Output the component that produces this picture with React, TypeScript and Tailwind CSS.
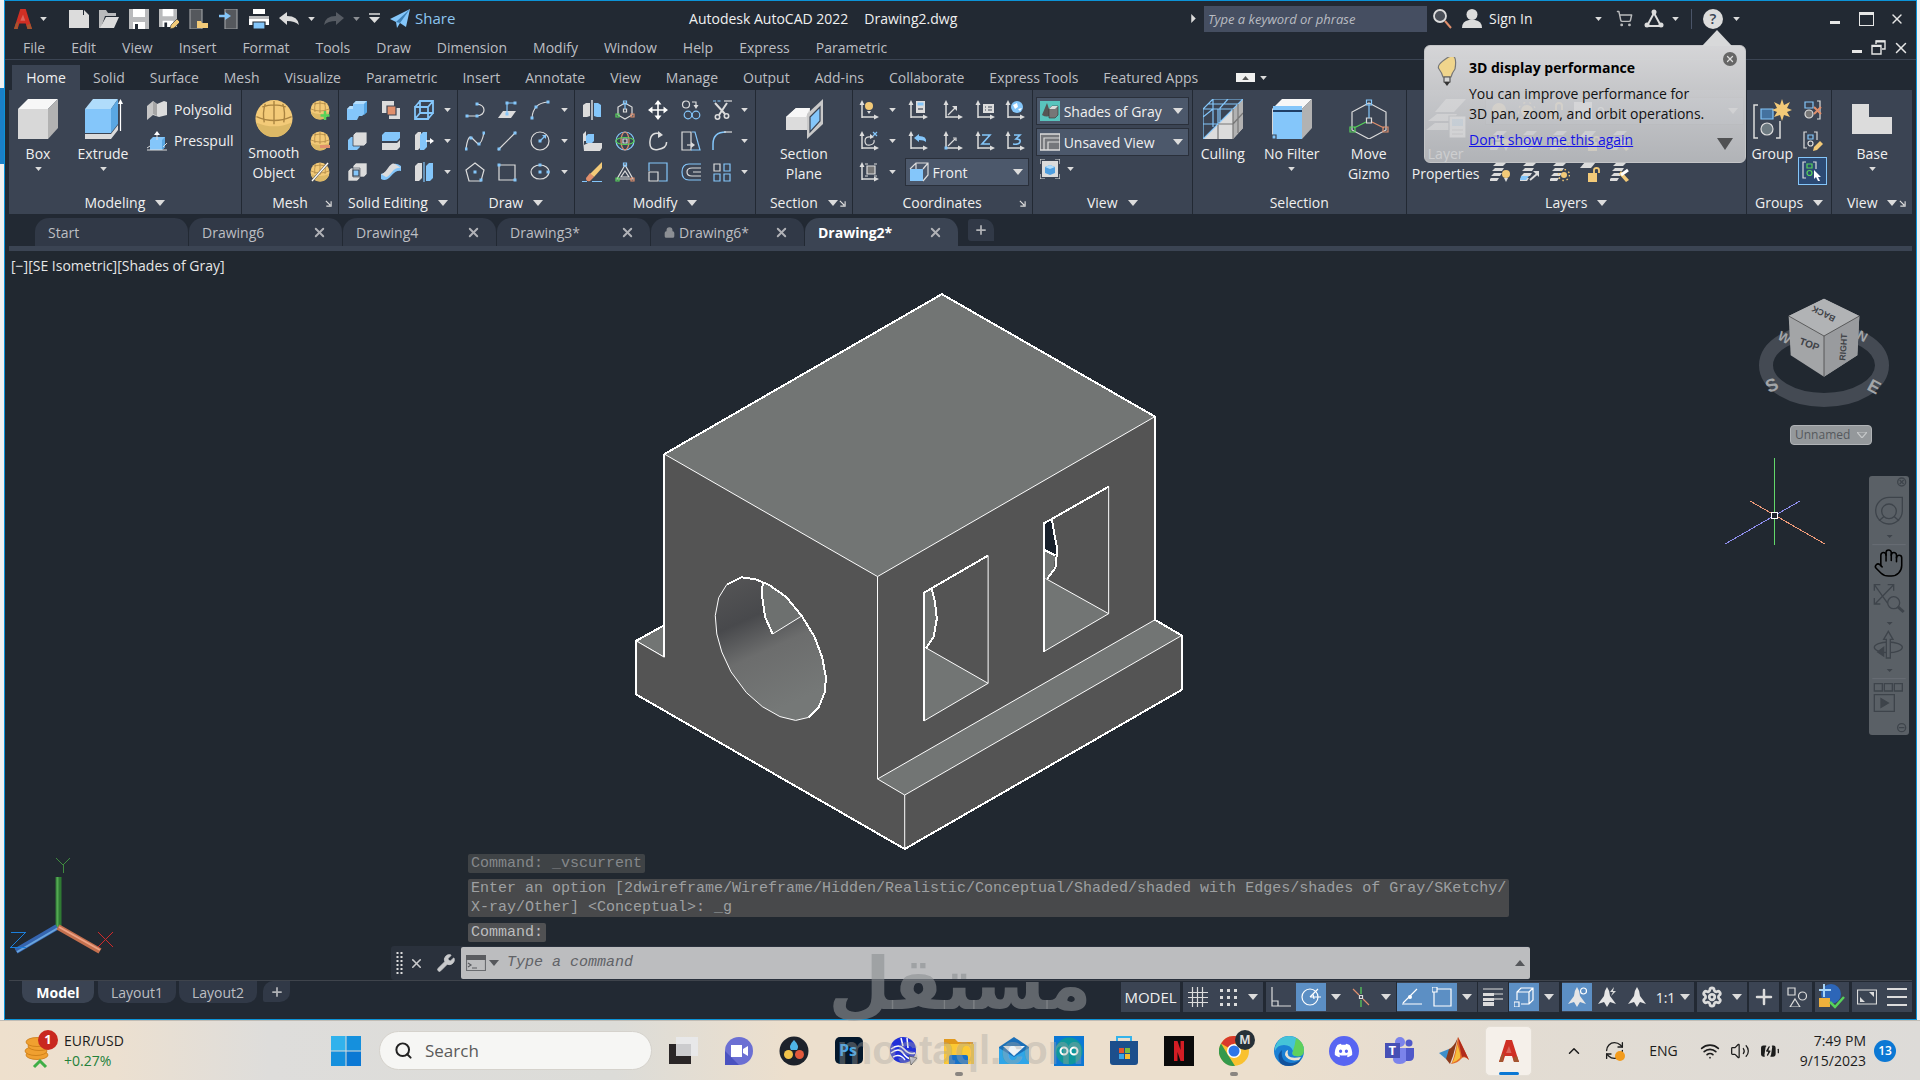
import type { ReactNode } from 'react';
import {
  BatteryCharging,
  ChevronUp,
  Hand,
  Lock,
  Plus,
  RefreshCw,
  Search,
  Settings,
  ShoppingCart,
  Volume2,
  Wifi,
  Wrench,
  X,
} from 'lucide-react';
import { FaDiscord } from 'react-icons/fa';

/* ---------- small building blocks ---------- */

const L = '#dcdcdc';
const B = '#84c6fa';
const O = '#e08f6c';
const G = '#57d25a';
const Y = '#f3ca78';

interface IconProps {
  children: ReactNode;
  className?: string;
  box?: string;
}

function Icon({ children, className = 'h-5 w-5', box = '0 0 20 20' }: IconProps) {
  return (
    <svg viewBox={box} className={`shrink-0 ${className}`} fill="none" stroke={L} strokeWidth="1.2" aria-hidden="true">
      {children}
    </svg>
  );
}

function Caret({ big = false, className = 'text-[#dcdcdc]' }: { big?: boolean; className?: string }) {
  return (
    <svg viewBox="0 0 10 6" className={`shrink-0 ${big ? 'h-[6px] w-[10px]' : 'h-[4px] w-[7px]'} ${className}`} aria-hidden="true">
      <path d="M0 0h10L5 6z" fill="currentColor" />
    </svg>
  );
}

function Tool({ name, w, children }: { name: string; w: string; children: ReactNode }) {
  return (
    <button aria-label={name} className={`flex h-[31px] items-center justify-center ${w}`}>
      {children}
    </button>
  );
}

function Launcher() {
  return (
    <svg viewBox="0 0 8 8" className="absolute right-[6px] top-[7px] h-[7px] w-[7px]" stroke={L} strokeWidth="1.3" fill="none">
      <path d="M1 1l5 5M7 1.500v5.500H1.500" />
    </svg>
  );
}

interface PanelProps {
  title: string;
  grow: string;
  caret?: boolean;
  launcher?: boolean;
  children: ReactNode;
}

function Panel({ title, grow, caret = true, launcher = false, children }: PanelProps) {
  return (
    <section aria-label={title} className={`flex min-w-0 flex-col border-r border-[#222933] ${grow}`}>
      <div className="flex h-[97px] pt-1">{children}</div>
      <div className="relative mt-[6px] flex h-5 items-center justify-center gap-[10px] leading-5 text-[#f0f0f0]">
        {title}
        {caret && <Caret big />}
        {launcher && <Launcher />}
      </div>
    </section>
  );
}

interface BigProps {
  label: string;
  second?: string;
  w: string;
  caret?: boolean;
  children: ReactNode;
}

function BigButton({ label, second, w, caret = false, children }: BigProps) {
  return (
    <button className={`flex shrink-0 flex-col items-center pt-[5px] leading-5 text-[#f0f0f0] ${w}`}>
      {children}
      <span className="mt-[5px]">{label}</span>
      {second && <span>{second}</span>}
      {caret && <Caret className="mt-[3px] text-[#dcdcdc]" />}
    </button>
  );
}

function Combo({ name, value, className, children }: { name: string; value: string; className: string; children?: ReactNode }) {
  return (
    <label className={`flex h-7 items-center border border-[#2a303b] bg-[#4c586b] pl-[3px] pr-[5px] ${className}`}>
      {children}
      <select aria-label={name} className="min-w-0 flex-1 appearance-none bg-transparent pl-1 text-[#f0f0f0] outline-none">
        <option>{value}</option>
      </select>
      <Caret big />
    </label>
  );
}

/* ---------- ribbon icons ---------- */

const cubeBig = (top: string, side: string, face: string) => (
  <g stroke="none">
    <path d="M0 10L10 0h30L30 10z" fill={top} />
    <path d="M30 10L40 0v29L30 40z" fill={side} />
    <path d="M0 10h30v30H0z" fill={face} />
  </g>
);

const sphere = (
  <>
    <circle cx="10" cy="10" r="9.500" fill={Y} stroke="none" />
    <path d="M1 12q9 4 18 0Q17 19.500 10 19.500T1 12z" fill="#dcb866" stroke="none" />
    <path d="M10 1v12M1 9q9 4 18 0M5.500 2.500Q4 7 5 12M14.500 2.500Q16 7 15 12M4 4q6-2 12 0" stroke="#a98340" strokeWidth=".7" />
  </>
);

const solidIcons: [string, ReactNode][] = [
  ['Union', <><path d="M6 4l3-3h11v11l-5 4h-3l-2 4H0V9l3-3h3z" fill={B} stroke="none" /><path d="M6 4l3-3h11l-3 3zM0 9l3-3h3v3z" fill="#b5defc" stroke="none" /><path d="M17 4l3-3v11l-3 3z" fill="#56a6e4" stroke="none" /></>],
  ['Interfere', <><path d="M1 1h12v12H1zM8 8h11v11H8z" fill={L} stroke="none" /><path d="M6 6h9v9H6z" fill={O} stroke="#3b4453" /></>],
  ['Extract edges', <><path d="M1 7h13v12H1zM6 1h13v12H6zM1 7l5-6M14 7l5-6M14 19l5-6M1 19l5-6" stroke={B} strokeWidth="1.800" /></>],
  ['Subtract', <><path d="M1 9l3-3h9v10l-3 3H1z" fill={B} stroke="none" /><path d="M6 4l3-3h11v11l-3 3H6z" fill={L} stroke="#3b4453" strokeWidth=".8" /></>],
  ['Slice', <><path d="M1 4l3-3h15v6l-3 3H1z" fill={B} stroke="none" /><path d="M1 12h15l3-3v7l-3 3H1z" fill={L} stroke="none" /></>],
  ['Extrude faces', <><path d="M1 4l3-3h3v15l-3 3H1z" fill={L} stroke="none" /><path d="M6 4l3-3h4v15l-3 3H6z" fill={B} stroke="none" /><path d="M12 10h5" stroke="#fff" strokeWidth="1.500" /><path d="M16 7l4 3-4 3z" fill="#fff" stroke="none" /></>],
  ['Intersect', <><path d="M1 9l3-3h9v10l-3 3H1zM6 4l3-3h11v11l-3 3H6z" fill={L} stroke="#3b4453" strokeWidth=".6" /><path d="M6 8h6v6H6z" fill={B} stroke="#3b4453" /></>],
  ['Thicken', <><path d="M0 12q5-1 9-7t11-1v5q-5-1-10 5T0 17z" fill={B} stroke="none" /><path d="M0 12q3 0 7-6t7-4l6 4q-5-1-9 4t-6 5z" fill={L} stroke="none" /></>],
  ['Separate', <><path d="M1 4l3-3h4v15l-3 3H1z" fill={L} stroke="none" /><path d="M12 4l3-3h4v15l-3 3h-4z" fill={B} stroke="none" /><path d="M10 0v20" stroke={B} /></>],
];

const dot = (x: number, y: number) => <path d={`M${x - 1.500} ${y - 1.500}h3v3h-3z`} fill={B} stroke="none" />;

const drawIcons: [string, ReactNode][] = [
  ['Polyline', <><path d="M2 16h10Q19 15 19 10T12 4" />{dot(2, 16)}{dot(12, 16)}{dot(12, 4)}</>],
  ['Planar surface', <><path d="M1 18l5-7h13l-5 7z" fill={L} stroke="none" /><path d="M10 13V3h7" stroke={B} />{dot(10, 3)}{dot(18, 3)}{dot(10, 14)}</>],
  ['Arc', <><path d="M2 18Q3 3 18 2" />{dot(2, 18)}{dot(6, 7)}{dot(18, 2)}</>],
  ['Spline', <><path d="M1 18Q3 3 7 7t6 6q4 0 6-12" />{dot(1, 18)}{dot(6, 7)}{dot(14, 13)}{dot(19, 2)}</>],
  ['Line', <><path d="M1 19L19 1" />{dot(2, 18)}{dot(18, 2)}</>],
  ['Circle', <><circle cx="10" cy="10" r="9" /><path d="M10 10l5-5" stroke={B} />{dot(10, 10)}<path d="M12 4h4v4z" fill={B} stroke="none" /></>],
  ['Polygon', <><path d="M10 1l9 7-3 11H4L1 8z" />{dot(10, 10)}{dot(16, 18)}</>],
  ['Rectangle', <><path d="M2 3h16v15H2z" />{dot(2, 3)}{dot(18, 18)}</>],
  ['Ellipse', <><ellipse cx="10" cy="10" rx="9" ry="7" />{dot(10, 10)}{dot(10, 3)}{dot(18, 10)}</>],
];

const modifyIcons: [string, ReactNode][] = [
  ['3D mirror', <><path d="M1 5l3-2h4v13l-3 1H1z" fill={L} stroke="none" /><path d="M12 3h4l3 2v12h-4l-3-1z" fill={B} stroke="none" /><path d="M10 0v20" stroke="#fff" /></>],
  ['3D move', <><path d="M10 3l7 4v8l-7 4-7-4V7zM8.500 9h3v3h-3z" /><path d="M10 3v6" stroke={B} /><path d="M8.500 1h3v3h-3z" stroke={B} /><path d="M1 14h3v3H1z" stroke={G} /><path d="M16 14h3v3h-3z" stroke={O} /></>],
  ['Move', <><path d="M10 2v16M2 10h16" stroke="#fff" strokeWidth="1.600" /><path d="M10 0l3.500 4.500h-7zM10 20l3.500-4.500h-7zM0 10l4.500-3.500v7zM20 10l-4.500-3.500v7z" fill="#fff" stroke="none" /></>],
  ['Copy', <><circle cx="5" cy="4.500" r="3.500" /><circle cx="7" cy="15" r="3.800" stroke={B} /><circle cx="15" cy="15" r="3.800" stroke={B} /><path d="M11 2h4v4" /><path d="M12.500 5h5L15 9z" fill={L} stroke="none" /></>],
  ['Trim', <><path d="M1 1h8" stroke={B} strokeDasharray="3 1.500" /><path d="M12 1h8" /><path d="M3 3l10 11M15 3L7 15" strokeWidth="2" /><circle cx="5.500" cy="17" r="2.200" strokeWidth="1.600" /><circle cx="14.500" cy="16" r="2.200" strokeWidth="1.600" /></>],
  ['3D align', <><path d="M1 20V3l3-3v10h-2z" fill={L} stroke="none" /><path d="M4 5l2-2h6v7l-2 2H4z" fill={B} stroke="none" /><path d="M2 14l4-2h14v5l-2 3H2z" fill={L} stroke="none" /></>],
  ['3D rotate', <><circle cx="10" cy="10" r="9" stroke={B} /><ellipse cx="10" cy="10" rx="4" ry="9" stroke={O} /><ellipse cx="10" cy="10" rx="9" ry="3.500" stroke={G} /><path d="M8 8h4v4H8z" /></>],
  ['Rotate', <><path d="M13 3Q3 0 2 10t8 8.500T18.500 11" strokeWidth="1.500" /><path d="M10 0l5 4-5 3z" fill={L} stroke="none" /></>],
  ['Stretch', <><path d="M1 1h9v18H1z" /><path d="M11 1h3l5 18h-9" stroke={B} /><path d="M6 14h6" /><path d="M10 11l4 3-4 3z" fill={L} stroke="none" /></>],
  ['Fillet', <><path d="M1 19v-6Q1 1 14 1" stroke={B} strokeWidth="1.500" /><path d="M12 1h8" /></>],
  ['Erase', <><path d="M20 0v6l-8 9-4-3z" fill={Y} stroke="none" /><path d="M8 11l4 4-4 4q-4 1-4-3z" fill={O} stroke="none" /><path d="M0 19.500h5M10 19.500h10" stroke={B} /></>],
  ['3D scale', <><path d="M10 3L2 17h16zM10 9l-4 6h8z" /><path d="M8.500 1h3v3h-3z" stroke={B} /><path d="M1 16h3v3H1z" stroke={G} /><path d="M16 16h3v3h-3z" stroke={O} /></>],
  ['Scale', <><path d="M1 9V1h18v18h-8" stroke={B} /><path d="M1 10h9v9H1z" /></>],
  ['Offset', <><path d="M20 2H8Q1 2 1 10t7 8h12" stroke={B} /><path d="M20 6h-9Q6 6 6 10t5 4h9M20 10h-8" /></>],
  ['Array', <><path d="M2 2h6v7H2z" /><path d="M12 2h6v7h-6zM2 12h6v7H2zM12 12h6v7h-6z" stroke={B} /></>],
];

const ucs = (
  <>
    <path d="M3 18V4M3 17h13" strokeWidth="1.500" />
    <path d="M.5 5L3 0l2.500 5zM15 14.500l5 2.500-5 2.500z" fill={L} stroke="none" />
  </>
);

const ucsIcons: [string, ReactNode][] = [
  ['UCS icon', <>{ucs}<circle cx="10" cy="6" r="4" fill={Y} stroke="none" /><path d="M8 11h4l-2 3z" fill={L} stroke="none" /></>],
  ['Named UCS', <>{ucs}<path d="M8 1h9v12H8z" fill={L} stroke="none" /><path d="M9.500 2.500h6v3h-6z" fill={B} stroke="none" /><path d="M10 9h5" stroke="#3b4453" /></>],
  ['UCS view', <>{ucs}<path d="M5 15l7-7" /><path d="M9 6h5v5z" fill={L} stroke="none" /></>],
  ['UCS list', <>{ucs}<path d="M8 4h11v9H8z" fill={L} stroke="none" /><path d="M10 7h1M13 7h4M10 10h1M13 10h4" stroke="#3b4453" /></>],
  ['UCS world', <>{ucs}<circle cx="12" cy="7" r="6" fill={B} stroke="none" /><path d="M8 5l4-2 1 4-3 2zM13 9l4-1-2 3z" fill="#fff" stroke="none" /></>],
  ['UCS X', <>{ucs}<path d="M12 6Q6 5 6 10t5 4 4-5" /><path d="M11 3l4 3-4 2z" fill={L} stroke="none" /><path d="M14 1l4 4M18 1l-4 4" stroke={B} /></>],
  ['UCS previous', <>{ucs}<path d="M6 7l5-4v2q8 0 7 6-2-2-7-2v2z" fill={B} stroke="none" /></>],
  ['UCS origin', <>{ucs}<path d="M5 15l7-7M10 7h3v3" />{dot(3, 17)}</>],
  ['UCS Z axis', <>{ucs}<path d="M7 4h8L7 13h8" stroke={B} strokeWidth="1.600" /></>],
  ['UCS 3 point', <>{ucs}<path d="M9 4h6l-4 4q5 0 4 3t-7 2" stroke={B} strokeWidth="1.600" /></>],
];

const sheets = (
  <path d="M3 4L7 0h10l-4 4zM2 9l3-3h9l-2 3zM1 14l3-3h8l-2 3zM0 17l1-1h8l-2 3H0z" fill={L} stroke="none" />
);

const layerIcons: [string, ReactNode][] = [
  ['Layer off', <>{sheets}<circle cx="16" cy="12" r="4" fill={Y} stroke="none" /><path d="M14 16h4l-2 4z" fill={L} stroke="none" /></>],
  ['Layer change', <>{sheets}<path d="M1 14h8l-3 4H0z" fill={B} stroke="none" /><path d="M10 18l7-6" strokeWidth="2" /><path d="M13 9h6v6z" fill={L} stroke="none" /></>],
  ['Layer freeze', <>{sheets}<circle cx="14" cy="13" r="3" fill={Y} stroke="none" /><circle cx="14" cy="13" r="5.500" stroke={Y} strokeWidth="1.500" strokeDasharray="1.500 2.800" /></>],
  ['Layer lock', <><path d="M0 6l5-6h11l-5 6z" fill={L} stroke="none" /><path d="M8 11h9v9H8z" fill={Y} stroke="none" /><path d="M14 11V8q0-2 2.500-2T19 8v3" stroke={Y} strokeWidth="1.800" /></>],
  ['Layer match', <>{sheets}<path d="M11 9l8 9-3 2-7-8z" fill={Y} stroke="none" /><path d="M18 8l-7 5" stroke="#fff" strokeWidth="3" /></>],
];

const isoLayerIcons = [...layerIcons].slice(0, 3).concat(layerIcons.slice(3));

/* ---------- title bar ---------- */

function AutocadLogo({ className }: { className: string }) {
  return (
    <svg viewBox="0 0 20 22" className={className} aria-hidden="true">
      <path d="M7 0h6l7 22h-5l-2-6H6l-2 6H0z" fill="#cf2f24" />
      <path d="M10 6l2.500 7H7z" fill="#fff" fillOpacity=".25" />
      <path d="M0 22l2-6 3-3-1 9zM20 22l-2-6-4 2 1 4z" fill="#a3552f" />
    </svg>
  );
}

const floppy = (
  <>
    <path d="M0 0h20v20H0z" fill="#b9babc" stroke="none" />
    <path d="M4 0h12v8H4zM4 13h12v7H4z" fill="#fff" stroke="none" />
    <path d="M6 15h3v5H6z" fill="#222933" stroke="none" />
  </>
);

const quickIcons: [string, ReactNode][] = [
  ['New', <path d="M0 1h14v5h6v13H0z M15 1l5 5h-5z" fill={L} stroke="none" />],
  ['Open', <><path d="M0 19V1h7l2 3h8v3H6L2 19z" fill="#b9babc" stroke="none" /><path d="M7 8h13l-5 11H1z" fill={L} stroke="none" /></>],
  ['Save', floppy],
  ['Save as', <><g transform="scale(.9)">{floppy}</g><path d="M11 20l1-4 6-6 3 3-6 6z" fill={Y} stroke="#222933" strokeWidth=".6" /></>],
  ['Open from mobile', <><path d="M1 0h12v20H1z" fill="#55585d" stroke="#9a9c9f" /><path d="M8 12h4l1 2h6v5H8z" fill={Y} stroke="none" /></>],
  ['Save to mobile', <><path d="M6 0h12v20H6z" fill="#55585d" stroke="#9a9c9f" /><path d="M0 7h7" stroke={B} strokeWidth="2.500" /><path d="M6 3l6 4-6 4z" fill={B} stroke="none" /></>],
  ['Plot', <><path d="M4 0h12v5H4zM0 7h20v9H0z" fill="#fff" stroke="none" /><path d="M0 7h20v3H0z" fill="#b9babc" stroke="none" /><path d="M4 13h12v7H4z" fill={B} stroke="#222933" /></>],
];

function TitleBar() {
  return (
    <header className="flex h-[35px] items-center">
      <div className="flex items-center">
        <AutocadLogo className="ml-[9px] h-5 w-[18px]" />
        <Caret className="ml-[8px] text-[#dcdcdc]" />
        <div className="ml-[22px] flex gap-[10px]">
          {quickIcons.map(([name, art]) => (
            <button key={name} aria-label={name}>
              <Icon>{art}</Icon>
            </button>
          ))}
          <button aria-label="Undo">
            <Icon><path d="M0 9l8-6v4q11 0 12 9-4-4-12-4v4z" fill={L} stroke="none" /></Icon>
          </button>
        </div>
        <Caret className="ml-[9px] text-[#dcdcdc]" />
        <button aria-label="Redo" className="ml-[9px]">
          <Icon><path d="M20 9l-8-6v4Q1 7 0 16q4-4 12-4v4z" fill="#565b63" stroke="none" /></Icon>
        </button>
        <Caret className="ml-[9px] text-[#8c8f94]" />
        <Icon className="ml-[9px] h-[11px] w-[11px]" box="0 0 11 11"><path d="M0 1h11" strokeWidth="1.500" /><path d="M0 4h11L5.500 10z" fill={L} stroke="none" /></Icon>
        <Icon className="ml-[10px] h-5 w-5"><path d="M0 10L20 0 16 18l-6-4-3 5-1-6z" fill={B} stroke="none" /><path d="M20 0L6 13l4 1z" fill="#3c7fb5" stroke="none" /></Icon>
        <button className="ml-[5px] text-[15px] text-[#8cc5f0]">Share</button>
      </div>
      <h1 className="flex flex-1 justify-center gap-4 text-[#f0f0f0]">
        <span>Autodesk AutoCAD 2022</span>
        <span>Drawing2.dwg</span>
      </h1>
      <div className="flex items-center">
        <svg viewBox="0 0 5 10" className="h-[9px] w-[5px]" aria-hidden="true"><path d="M0 0l5 5-5 5z" fill={L} /></svg>
        <input
          aria-label="Search help"
          placeholder="Type a keyword or phrase"
          className="ml-2 h-[26px] w-[223px] bg-[#454e61] px-1 text-[13px] italic outline-none placeholder:text-[#b9bcc2]"
        />
        <Icon className="ml-[6px] h-5 w-5"><circle cx="7" cy="7" r="6" strokeWidth="1.800" fill="#4a4f58" /><path d="M12 12l6 7" stroke={O} strokeWidth="2" /></Icon>
        <Icon className="ml-[9px] h-5 w-5"><circle cx="10" cy="5.500" r="5.500" fill={L} stroke="none" /><path d="M0 19q0-7 7-8h6q7 1 7 8z" fill={L} stroke="none" /></Icon>
        <button className="ml-[7px] w-[106px] text-left text-[#f0f0f0]">Sign In</button>
        <Caret />
        <ShoppingCart className="ml-[14px] h-[17px] w-[17px] text-[#b9babc]" strokeWidth={2} />
        <Icon className="ml-[11px] h-5 w-5"><path d="M10 4L3 17h14z" strokeWidth="2" /><circle cx="10" cy="3" r="2.500" fill={L} stroke="none" /><circle cx="3" cy="16" r="2.500" fill={L} stroke="none" /><circle cx="17" cy="16" r="2.500" fill={L} stroke="none" /></Icon>
        <Caret className="ml-[8px] text-[#dcdcdc]" />
        <span className="ml-3 h-5 w-px bg-[#4a5468]" />
        <button aria-label="Help" className="ml-[11px] flex h-5 w-5 items-center justify-center rounded-full bg-[#dcdcdc] text-[15px] font-semibold text-[#3b4453]">?</button>
        <Caret className="ml-[10px] text-[#dcdcdc]" />
        <button aria-label="Minimize" className="ml-[90px] mt-2 h-[3px] w-[10px] bg-[#e6e6e6]" />
        <button aria-label="Maximize" className="ml-[19px] h-[14px] w-[15px] border border-t-[3px] border-[#e6e6e6]" />
        <button aria-label="Close" className="mr-[11px] ml-[15px]"><X className="h-[18px] w-[16px] text-[#e6e6e6]" strokeWidth={2} /></button>
      </div>
    </header>
  );
}

const menus = ['File', 'Edit', 'View', 'Insert', 'Format', 'Tools', 'Draw', 'Dimension', 'Modify', 'Window', 'Help', 'Express', 'Parametric'];

function MenuBar() {
  return (
    <nav className="flex h-6 items-center gap-[26px] border-b border-[#3b4453] pl-[18px] text-[#bdbfc3]">
      {menus.map((m) => (
        <button key={m}>{m}</button>
      ))}
      <div className="ml-auto flex items-center pr-[6px]">
        <button aria-label="Minimize drawing" className="mt-2 h-[3px] w-[10px] bg-[#e6e6e6]" />
        <button aria-label="Restore drawing" className="ml-[9px]">
          <Icon className="h-[15px] w-[15px]" box="0 0 15 15"><path d="M5 4V1h9v8h-3M1 5.500h9V14H1z" stroke="#e6e6e6" strokeWidth="1.400" /><path d="M1 6h9M5 1.500h9" stroke="#e6e6e6" strokeWidth="2" /></Icon>
        </button>
        <button aria-label="Close drawing" className="ml-[6px]"><X className="h-[18px] w-[18px] text-[#e6e6e6]" strokeWidth={2} /></button>
      </div>
    </nav>
  );
}

const ribbonTabs = ['Solid', 'Surface', 'Mesh', 'Visualize', 'Parametric', 'Insert', 'Annotate', 'View', 'Manage', 'Output', 'Add-ins', 'Collaborate', 'Express Tools', 'Featured Apps'];

function RibbonTabs() {
  return (
    <nav className="flex h-[30px] items-end pl-[7px] text-[#bdbfc3]">
      <button className="h-[25px] w-[68px] bg-[#3b4453] text-[#f0f0f0]">Home</button>
      <div className="flex h-[25px] items-center gap-[25px] pl-[13px]">
        {ribbonTabs.map((t) => (
          <button key={t}>{t}</button>
        ))}
        <div className="ml-[13px] flex items-center gap-[5px]">
          <button aria-label="Minimize ribbon" className="flex h-[9px] w-[19px] items-center justify-center bg-[#f0f0f0]">
            <Caret className="rotate-180 text-[#555]" />
          </button>
          <Caret />
        </div>
      </div>
    </nav>
  );
}

/* ---------- ribbon ---------- */

function Ribbon() {
  return (
    <div className="mx-1 flex h-[124px] bg-[#3b4453]">
      <Panel title="Modeling" grow="flex-[233_1_0]">
        <BigButton label="Box" w="w-[58px]" caret>
          <Icon className="h-10 w-10" box="0 0 40 40">{cubeBig('#f7f7f7', '#b2b2b2', '#d8d8d8')}</Icon>
        </BigButton>
        <BigButton label="Extrude" w="w-[72px]" caret>
          <Icon className="h-10 w-10" box="0 0 40 40">
            <path d="M2 10L10 0h25L28 10z" fill="#b0dcfb" stroke="none" />
            <path d="M28 10l7-10v25l-7 9z" fill="#5aa7e2" stroke="none" />
            <path d="M2 10h26v24H2z" fill={B} stroke="none" />
            <path d="M2 35h26l7-9v5l-7 9H2z" fill={L} stroke="none" />
            <path d="M37.500 3v29" stroke="#fff" />
            <path d="M35 5l2.500-5L40 5z" fill="#fff" stroke="none" />
          </Icon>
        </BigButton>
        <div className="flex flex-col pl-2 text-[#f0f0f0]">
          <button className="flex h-[31px] items-center gap-[7px]">
            <Icon><path d="M0 6l6-5v14l-6 5z" fill="#c5c5c5" stroke="none" /><path d="M6 1l4 3 7-3 3 1v13l-8 2-6-2z" fill={L} stroke="none" /><path d="M6 1l4 3v12l-4-2z" fill="#a5a5a5" stroke="none" /></Icon>
            Polysolid
          </button>
          <button className="flex h-[31px] items-center gap-[7px]">
            <Icon><path d="M3 9l3-3h12v10l-3 3H3z" fill={B} stroke="none" /><path d="M15 9l3-3v10l-3 3z" fill="#5aa7e2" stroke="none" /><path d="M10 3v6M0 19h20M16 16l4-4M0 17l3-2" strokeWidth="1" /><path d="M7 4l3-4 3 4z" fill="#fff" stroke="none" /></Icon>
            Presspull
          </button>
        </div>
      </Panel>

      <Panel title="Mesh" grow="flex-[97_1_0]" caret={false} launcher>
        <BigButton label="Smooth" second="Object" w="w-[64px]">
          <Icon className="h-[39px] w-10">{sphere}</Icon>
        </BigButton>
        <div className="flex flex-col">
          <Tool name="Smooth more" w="w-7"><Icon>{sphere}<path d="M15 11v9M10.500 15.500h9" stroke={G} strokeWidth="2.500" /></Icon></Tool>
          <Tool name="Smooth less" w="w-7"><Icon>{sphere}<path d="M10 15.500h10" stroke={O} strokeWidth="3" /></Icon></Tool>
          <Tool name="Refine mesh" w="w-7"><Icon>{sphere}<path d="M2 19L18 1" stroke="#5a5a5a" strokeWidth="2.500" /><path d="M2 19L18 1" stroke="#fff" /></Icon></Tool>
        </div>
      </Panel>

      <Panel title="Solid Editing" grow="flex-[118_1_0]">
        <div className="grid grid-cols-[35px_34px_32px_14px]">
          {[0, 3, 6].map((r) => (
            <div key={r} className="contents">
              {solidIcons.slice(r, r + 3).map(([n, a]) => <Tool key={n} name={n} w="w-full"><Icon>{a}</Icon></Tool>)}
              <Tool name="More" w="w-full"><Caret /></Tool>
            </div>
          ))}
        </div>
      </Panel>

      <Panel title="Draw" grow="flex-[117_1_0]">
        <div className="grid grid-cols-[34px_30px_36px_14px]">
          {[0, 3, 6].map((r) => (
            <div key={r} className="contents">
              {drawIcons.slice(r, r + 3).map(([n, a]) => <Tool key={n} name={n} w="w-full"><Icon>{a}</Icon></Tool>)}
              <Tool name="More" w="w-full"><Caret /></Tool>
            </div>
          ))}
        </div>
      </Panel>

      <Panel title="Modify" grow="flex-[181_1_0]">
        <div className="grid grid-cols-[33px_33px_33px_33px_30px_14px]">
          {[0, 5, 10].map((r) => (
            <div key={r} className="contents">
              {modifyIcons.slice(r, r + 5).map(([n, a]) => <Tool key={n} name={n} w="w-full"><Icon>{a}</Icon></Tool>)}
              <Tool name="More" w="w-full"><Caret /></Tool>
            </div>
          ))}
        </div>
      </Panel>

      <Panel title="Section" grow="flex-[96_1_0]" launcher>
        <BigButton label="Section" second="Plane" w="w-full">
          <Icon className="h-10 w-10" box="0 0 40 40">
            <path d="M2 18L12 9h14v22H2z" fill={L} stroke="none" />
            <path d="M2 18L12 9h14l-4 9z" fill="#f7f7f7" stroke="none" />
            <path d="M23 15L39 0v25L23 40z" fill="#c9c9c9" stroke="none" />
            <path d="M26 18l10-10v14L26 33z" fill={B} stroke="#3b4453" />
          </Icon>
        </BigButton>
      </Panel>

      <Panel title="Coordinates" grow="flex-[180_1_0]" caret={false} launcher>
        <div className="grid w-full grid-cols-[32px_16px_35px_34px_30px_30px]">
          {[0, 5].map((r) => (
            <div key={r} className="contents">
              <Tool name={ucsIcons[r][0]} w="w-full"><Icon>{ucsIcons[r][1]}</Icon></Tool>
              <Tool name="More" w="w-full"><Caret /></Tool>
              {ucsIcons.slice(r + 1, r + 5).map(([n, a]) => <Tool key={n} name={n} w="w-full"><Icon>{a}</Icon></Tool>)}
            </div>
          ))}
          <Tool name="UCS object" w="w-full"><Icon>{ucs}<path d="M8 4h8v8H8z" fill="#777" stroke={L} /><path d="M6 2h3M15 2h3M6 14h3M15 14h3" /></Icon></Tool>
          <Tool name="More" w="w-full"><Caret /></Tool>
          <Combo name="Named UCS" value="Front" className="col-span-4 mt-[2px] ml-[4px] w-[124px]">
            <Icon><path d="M1 7h13v12H1z" fill={B} stroke="none" /><path d="M1 7l6-6h12v12l-5 6M14 7l5-6M7 1v6" /></Icon>
          </Combo>
        </div>
      </Panel>

      <Panel title="View" grow="flex-[160_1_0]">
        <div className="flex w-full flex-col gap-[3px] px-[3px] pt-[3px]">
          <Combo name="Visual style" value="Shades of Gray" className="w-full">
            <Icon><path d="M0 0h20v20H0z" fill="#59c4bd" stroke="none" /><path d="M7 2l4 12q-4 3-9 0z" fill="#555" stroke="none" /><path d="M9 8l3-3h6v9l-3 3H9z" fill="#777" stroke="#333" strokeWidth=".6" /><path d="M9 8l3-3h6l-3 3z" fill={L} stroke="none" /></Icon>
          </Combo>
          <Combo name="Saved view" value="Unsaved View" className="w-full">
            <Icon><path d="M0 2h20v16H0z" fill="#75777b" stroke={L} strokeWidth="1.500" /><path d="M4 18V6h16M8 18V10h12" /></Icon>
          </Combo>
          <div className="flex items-center gap-[7px] pl-1">
            <Icon><path d="M2 2h16v16H2z" fill={L} stroke="none" /><path d="M0 5V0h5M15 0h5v5M20 15v5h-5M5 20H0v-5" /><path d="M5 8l5-2 5 2v6l-5 2-5-2z" fill="#4f9fe0" stroke="none" /><path d="M5 8l5-2 5 2-5 2z" fill="#b0dcfb" stroke="none" /></Icon>
            <Caret />
          </div>
        </div>
      </Panel>

      <Panel title="Selection" grow="flex-[214_1_0]" caret={false}>
        <BigButton label="Culling" w="w-[60px]">
          <Icon className="h-10 w-10" box="0 0 40 40">
            <path d="M0 40L30 10 40 0v29L30 40z" fill={L} stroke="none" />
            <path d="M30 10L40 0v29L30 40z" fill="#b2b2b2" stroke="none" />
            <path d="M0 40V10L10 0h30L0 40M10 0v28M25 0l-8 9v14M0 25h15M15 10v15M0 10h30M5 5h30M0 18l10-8" stroke={B} />
            <path d="M15 26v14M15 25h15M30 10v30M35 5v29M30 25l10-11" stroke="#777" />
          </Icon>
        </BigButton>
        <BigButton label="No Filter" w="w-[78px]" caret>
          <Icon className="h-10 w-10" box="0 0 40 40">
            {cubeBig('#f7f7f7', '#b2b2b2', '#d8d8d8')}
            <path d="M1 7h29v33H1z" fill={B} stroke="none" />
            <path d="M1 12h29" stroke="#1f3f66" strokeWidth="2" />
            <path d="M0 36h4v4H0z" fill={B} stroke="#3b4453" />
          </Icon>
        </BigButton>
        <BigButton label="Move" second="Gizmo" w="w-[76px]">
          <Icon className="h-10 w-10" box="0 0 40 40">
            <path d="M20 4l17 9v18l-17 9-17-9V13zM17.500 19h5v5h-5z" />
            <path d="M20 5v14M17.500 1h5v5h-5z" stroke={B} />
            <path d="M17 23L5 29M1 28h5v5H1z" stroke={G} />
            <path d="M23 23l12 6M34 28h5v5h-5z" stroke={O} />
          </Icon>
        </BigButton>
      </Panel>

      <Panel title="Layers" grow="flex-[341_1_0]">
        <BigButton label="Layer" second="Properties" w="w-[78px]">
          <Icon className="h-10 w-10" box="0 0 40 40">
            <path d="M9 13L20 0h20L28 13zM2 22l9-7h20l-4 7zM0 31l9-7h14v7z" fill={L} stroke="none" />
            <path d="M23 17h17v22H23z" fill="#fff" stroke="#3b4453" />
            <path d="M26 20h11v7H26z" fill={B} stroke="none" />
            <path d="M26 31h11M26 35h11" stroke="#888" />
          </Icon>
        </BigButton>
        <div className="flex flex-1 flex-col">
          <Combo name="Layer" value="0" className="mt-[3px] mr-[2px]">
            <Icon className="mr-2 h-5 w-5"><circle cx="10" cy="9" r="7" fill={Y} stroke="none" /></Icon>
            <Icon className="mr-2 h-5 w-5"><circle cx="10" cy="10" r="6" fill={Y} stroke="none" /><circle cx="10" cy="10" r="8.500" stroke={Y} strokeDasharray="2 4" /></Icon>
            <Icon className="mr-2 h-5 w-5"><path d="M2 9h11v9H2z" fill={Y} stroke="none" /><path d="M11 9V5q0-3 3-3t3 3v4" stroke={Y} strokeWidth="2" /></Icon>
            <Icon className="h-5 w-5"><path d="M1 1h18v18H1z" fill="#fff" stroke="none" /></Icon>
          </Combo>
          {[isoLayerIcons, layerIcons].map((row, i) => (
            <div key={i} className="flex">
              {row.map(([n, a]) => <Tool key={n} name={i ? `${n} on selection` : n} w="w-[30px]"><Icon>{a}</Icon></Tool>)}
            </div>
          ))}
        </div>
      </Panel>

      <Panel title="Groups" grow="flex-[85_1_0]">
        <BigButton label="Group" w="w-[51px]">
          <Icon className="h-10 w-10" box="0 0 40 40">
            <path d="M6 6H2v33h4M24 39h4V22" strokeWidth="1.500" />
            <path d="M9 10h12v10H9z" fill="#44729f" stroke={B} />
            <circle cx="15" cy="30" r="6" fill="#6c7980" />
            <path d="M30 0l2 6 6-3-3 6 5 2-5 2 3 5-6-2-2 6-2-6-6 2 3-5-5-2 5-2-3-6 6 3z" fill={Y} stroke="none" />
          </Icon>
        </BigButton>
        <div className="flex flex-col">
          <Tool name="Ungroup" w="w-[30px]"><Icon><path d="M14 1h3v18h-3" /><path d="M2 2h8v6H2z" stroke={B} /><circle cx="6" cy="14" r="4" fill="#777" stroke={L} /><path d="M11 7l7 7M18 7l-7 7" stroke={O} strokeWidth="2" /></Icon></Tool>
          <Tool name="Group edit" w="w-[30px]"><Icon><path d="M4 1H1v16h3M11 1h3v8" /><path d="M5 4h5v4H5z" stroke={B} /><circle cx="7.500" cy="12.500" r="2.500" /><path d="M10 20l1-4 6-6 3 3-6 6z" fill={Y} stroke="none" /></Icon></Tool>
          <button aria-label="Group selection" className="mt-[1px] flex h-7 w-[29px] items-center justify-center border border-[#84c6fa] bg-[#2c4a73]">
            <Icon><path d="M4 1H1v16h3M11 1h3v7" /><path d="M5 3h5v4H5z" stroke={G} /><circle cx="7.500" cy="12" r="2.500" stroke={G} /><path d="M12 9l7 7h-3l2 4h-2l-2-4-2 2z" fill="#fff" stroke="none" /></Icon>
          </button>
        </div>
      </Panel>

      <Panel title="View" grow="flex-[80_1_0] border-r-0" launcher>
        <BigButton label="Base" w="w-full" caret>
          <Icon className="h-10 w-10" box="0 0 40 40"><path d="M0 5h17v13h23v17H0z" fill={L} stroke="none" /></Icon>
        </BigButton>
      </Panel>
    </div>
  );
}

/* ---------- file tabs ---------- */

const files = [
  { name: 'Start', closable: false },
  { name: 'Drawing6', closable: true },
  { name: 'Drawing4', closable: true },
  { name: 'Drawing3*', closable: true },
  { name: 'Drawing6*', closable: true, locked: true },
  { name: 'Drawing2*', closable: true, active: true },
];

function FileTabs() {
  return (
    <div className="mx-1 border-b-[5px] border-[#3b4453]">
      <div className="flex h-8 items-end pl-[26px]">
        {files.map((f) => (
          <div
            key={f.name}
            className={`flex h-7 w-[154px] items-center justify-between rounded-t-[14px] border-r border-[#222933] pr-[15px] pl-[13px] ${
              f.active ? 'bg-[#3b4453] font-bold text-white' : 'bg-[#313947] text-[#bdbfc3]'
            }`}
          >
            <button className="flex items-center gap-1">
              {f.locked && <Lock className="h-[13px] w-[11px] fill-[#8c8f94] text-[#8c8f94]" strokeWidth={3} />}
              {f.name}
            </button>
            {f.closable && (
              <button aria-label={`Close ${f.name}`}>
                <X className="h-[15px] w-[15px] text-[#b0b2b6]" strokeWidth={3} />
              </button>
            )}
          </div>
        ))}
        <button aria-label="New drawing" className="ml-[9px] flex h-[22px] w-[26px] items-center justify-center self-center rounded-l-[3px] rounded-tr-[10px] bg-[#313947]">
          <Plus className="h-[14px] w-[14px] text-[#b0b2b6]" strokeWidth={3} />
        </button>
      </div>
    </div>
  );
}

/* ---------- viewport ---------- */

function SolidModel() {
  return (
    <svg viewBox="0 0 1568 1568" className="absolute top-[29px] left-[615px] h-[600px] w-[600px]" stroke="#fff" strokeLinejoin="round" fill="none" role="img" aria-label="Housing block">
      <defs>
        <linearGradient id="bore" x1="0" y1="0" x2=".35" y2="1">
          <stop offset="0" stopColor="#565657" />
          <stop offset=".35" stopColor="#48494c" />
          <stop offset=".6" stopColor="#6c6d6d" />
          <stop offset="1" stopColor="#757877" />
        </linearGradient>
      </defs>
      <g shapeRendering="crispEdges" strokeWidth="2.600">
        <path d="M42 943l74-41v84z" fill="#727574" />
        <path d="M116 455l557 320 725-418v531l70 41v142l-724 416-702-404V943l74 43z" fill="#545454" stroke="none" />
        <path d="M841 37l557 320-725 418-557-320z" fill="#727574" />
        <path d="M673 1304l725-416 70 41-724 417z" fill="#727574" />
        <path d="M673 775v529M744 1346v141M42 943l74 43" />
        <path d="M116 986V455L841 37l557 320v531l70 41v142l-724 416-702-404V943l74-41" strokeWidth="5.200" />

        <path id="hole" d="M317 777l-38 19-21 34-9 47 4 48 13 47 24 52 40 54 42 37 46 26 41 10 34-8 27-28 16-40 2-38-10-52-20-53-33-54-40-49-45-32-36-15z" fill="url(#bore)" />
        <path d="M373 790l-2 32 8 58 20 45 76-47-40-49-45-32z" fill="#6d706f" stroke="none" />
        <path d="M399 925l76-47" />
        <path d="M373 790l-2 32 8 58 20 45M279 796l38-19 37 5 36 15 45 32 40 49 33 54 20 53 10 52-2 38-16 40-27 28" strokeWidth="5.200" />

        <path d="M795 817l20-9 8 32 5 45-8 47-21 31-4-2z" fill="#6d706f" stroke="none" />
        <path d="M799 961l163 93-167 98V961z" fill="#727574" stroke="none" />
        <path d="M962 720v334l-167 98M799 961l163 93" />
        <path d="M795 1152V817l167-97M815 808l8 32 5 45-8 47-21 31" strokeWidth="5.200" />

        <path d="M1108 636l21-9 9 53 5 23-5 17-30-14z" fill="#18202b" stroke="none" />
        <path d="M1108 706l30 14-5 32-16 28h-9z" fill="#727574" stroke="none" />
        <path d="M1112 780l165 92-169 99V780z" fill="#727574" stroke="none" />
        <path d="M1277 540v332l-169 99M1112 780l165 92" />
        <path d="M1108 971V636l169-96M1129 627l9 53 5 23-5 49-21 28M1110 706l28 14" strokeWidth="5.200" />
      </g>
    </svg>
  );
}

function ViewCube() {
  return (
    <svg viewBox="0 0 420 360" className="h-[120px] w-[140px]" aria-label="View cube" role="img" fontFamily="Liberation Sans" fontWeight="bold">
      <ellipse cx="204" cy="220" rx="174" ry="104" fill="none" stroke="#444a53" strokeWidth="42" />
      <g fill="#a2a5a8" fontSize="54">
        <text x="62" y="140" fontSize="40" transform="rotate(28 62 140)">W</text>
        <text x="300" y="138" fontSize="40" transform="rotate(28 300 138)">N</text>
        <text x="38" y="304" transform="rotate(-24 38 304)">S</text>
        <text x="330" y="292" transform="rotate(28 330 292)">E</text>
      </g>
      <path d="M204 20l106 52-6 118-100 64-100-64-6-118z" fill="#a3a5a7" />
      <path d="M204 20l106 52-106 60L98 72z" fill="#b1b3b5" />
      <path d="M204 132l106-60-6 118-100 64z" fill="#999b9e" />
      <path d="M98 72l106 60 106-60M204 132v122" fill="none" stroke="#333" strokeWidth="2" />
      <g fill="#3f4247" fontSize="30">
        <text x="128" y="156" transform="rotate(20 128 156)">TOP</text>
        <text x="268" y="206" fontSize="26" transform="rotate(-86 268 206)">RIGHT</text>
        <text x="240" y="74" fontSize="26" transform="rotate(207 240 74)">BACK</text>
      </g>
    </svg>
  );
}

function NavigationBar() {
  const line = '#3e444b';
  return (
    <svg viewBox="0 0 120 777" className="h-[259px] w-10 rounded-[3px] bg-[#5a6066]" fill="none" stroke={line} strokeWidth="4" aria-label="Navigation bar" role="img">
      <circle cx="98" cy="18" r="12" />
      <path d="M92 12l12 12M104 12L92 24" />
      <path d="M60 64h40v42a40 40 0 1 1-40-42z" />
      <circle cx="60" cy="106" r="22" />
      <path d="M30 134l14-12M90 134l-14-12" />
      <path d="M10 206h100M10 608h100" stroke="#70767c" strokeWidth="2" />
      <path d="M53 177h18l-9 9zM53 438h18l-9 9zM53 579h18l-9 9z" fill={line} stroke="none" />
      <path d="M16 326l40 56M18 384l56-58M16 344v-18h18M56 326h18v18M16 366v18h18" />
      <circle cx="74" cy="380" r="18" />
      <path d="M86 392l18 16" strokeWidth="9" />
      <ellipse cx="58" cy="514" rx="42" ry="16" />
      <path d="M52 546v-56h-8l14-24 14 24h-8v56z" fill="#5a6066" />
      <path d="M26 528l18-14v26z" fill={line} />
      <path d="M16 623h24v22H16zM46 623h24v22H46zM76 623h24v22H76zM16 656h60v50H16z" />
      <path d="M36 668v26l22-13z" fill={line} />
      <circle cx="98" cy="755" r="12" />
      <path d="M90 755h16" />
      <Hand x="12" y="214" width="94" height="94" strokeWidth={1.200} />
    </svg>
  );
}

function Viewport() {
  return (
    <main className="relative flex min-h-0 flex-1 flex-col bg-[#212830]">
      <p className="pt-[5px] pl-[6px] leading-5 text-[#e6e6e6]">[−][SE Isometric][Shades of Gray]</p>
      <SolidModel />

      <div className="absolute top-[41px] right-[20px]"><ViewCube /></div>
      <button className="absolute top-[174px] right-[44px] flex h-5 w-[82px] items-center justify-between rounded-[4px] border border-[#b0b3b6] bg-[#94989b] px-1 text-[12px] text-[#54585d]">
        Unnamed
        <Icon className="h-[6px] w-[10px]" box="0 0 10 6"><path d="M0 0h10L5 6z" stroke="#c5c7c9" /></Icon>
      </button>

      <svg viewBox="0 0 100 88" className="absolute top-[207px] right-[91px] h-[88px] w-[100px]" fill="none" aria-hidden="true" shapeRendering="crispEdges">
        <path d="M0 86l75-43" stroke="#8f8fee" />
        <path d="M25 43l75 43" stroke="#ee9a78" />
        <path d="M49.500 0v87" stroke="#62d86a" />
        <path d="M46.500 54.500h6v6h-6z" stroke="#fff" fill="#212830" />
      </svg>

      <div className="absolute top-[225px] right-[7px]"><NavigationBar /></div>

      <svg viewBox="0 0 110 102" className="absolute bottom-[22px] left-[5px] h-[102px] w-[110px]" fill="none" aria-hidden="true">
        <path d="M48.500 21v50" stroke="#2f7a33" strokeWidth="6" />
        <path d="M47.500 21v50" stroke="#54a854" strokeWidth="2" />
        <path d="M47 71L6 95" stroke="#3565b0" strokeWidth="6" />
        <path d="M48 72L7 96" stroke="#6aa5dd" strokeWidth="2" />
        <path d="M48 71l42 24" stroke="#c4704e" strokeWidth="6" />
        <path d="M49 71l41 23" stroke="#eda184" strokeWidth="2" />
        <g shapeRendering="crispEdges">
          <path d="M46 2l7 7 7-7M53 9v8" stroke="#3f8a3f" />
          <path d="M1 76h15L1 91h15" stroke="#1b7fdc" />
          <path d="M88 76l15 15M103 76L88 91" stroke="#d02a2a" />
        </g>
      </svg>

      {/* command history sits above the floating command line */}
      <div className="mt-auto flex flex-col items-start gap-[6px] pb-1 pl-[463px] font-['Liberation_Mono',monospace] text-[15px] leading-[19px]">
        <p className="rounded-[2px] bg-[#3f4346] px-[3px] text-[#85888b]">Command: _vscurrent</p>
        <p className="rounded-[2px] bg-[#48494b] px-[3px] text-[#9ea0a2]">
          Enter an option [2dwireframe/Wireframe/Hidden/Realistic/Conceptual/Shaded/shaded with Edges/shades of Gray/SKetchy/
          <br />
          X-ray/Other] &lt;Conceptual&gt;: _g
        </p>
        <p className="rounded-[2px] bg-[#505153] px-[3px] text-[#bcbdbf]">Command:</p>
      </div>
      <div className="ml-[386px] flex h-[34px] w-[1139px] items-center rounded-[3px] bg-[#2a313c]">
        <Icon className="ml-[5px] h-[22px] w-[8px]" box="0 0 8 22"><path d="M1.500 0v22M5.500 0v22" strokeWidth="2" strokeDasharray="2 2" /></Icon>
        <button aria-label="Close command line" className="ml-[5px]"><X className="h-[15px] w-[15px] text-[#c9cacc]" strokeWidth={2.500} /></button>
        <button aria-label="Customize" className="ml-3"><Wrench className="h-5 w-5 fill-[#c9cacc] text-[#c9cacc]" strokeWidth={1} /></button>
        <div className="ml-[5px] flex h-8 flex-1 items-center rounded-[2px] bg-[#bcbdbf] px-[5px]">
          <Icon className="h-[17px] w-5" box="0 0 20 17"><path d="M.500.500h19v15H.500z" stroke="#6a6c70" /><path d="M0 0h20v5H0z" fill="#5a5c60" stroke="none" /><path d="M2 8l3 2-3 2M6 13h5" stroke="#5a5c60" /></Icon>
          <Caret big className="ml-[3px] text-[#55575b]" />
          <input
            aria-label="Command"
            placeholder="Type a command"
            className="ml-2 flex-1 bg-transparent font-['Liberation_Mono',monospace] text-[15px] italic outline-none placeholder:text-[#606266]"
          />
          <Caret big className="rotate-180 text-[#55575b]" />
        </div>
      </div>
    </main>
  );
}

/* ---------- layout tabs and status bar ---------- */

function StatusCell({ name, on = false, w = 'w-[30px]', children }: { name: string; on?: boolean; w?: string; children: ReactNode }) {
  return (
    <button aria-label={name} className={`flex items-center justify-center ${w} ${on ? 'my-[1px] bg-[#5c8fc4]' : ''}`}>
      {children}
    </button>
  );
}

function StatusGroup({ children }: { children: ReactNode }) {
  return <div className="flex h-[30px] bg-[#3b4453]">{children}</div>;
}

const arrowPerson = <path d="M10 0q3 4 3 9l6 8-6-2-3 5-3-5-6 2 6-8q0-5 3-9z" fill="#e6e6e6" stroke="none" />;

function StatusBar() {
  const drop = (
    <StatusCell name="Options" w="w-5">
      <Caret big />
    </StatusCell>
  );
  return (
    <footer className="mx-1 flex h-[39px] items-start border-t border-[#3f444c]">
      <div className="flex pl-[13px]">
        <button className="h-[22px] w-[72px] rounded-b-[10px] bg-[#3b4453] font-bold text-white">Model</button>
        <button className="ml-[4px] h-[22px] w-[78px] rounded-b-[10px] bg-[#313947] text-[#bdbfc3]">Layout1</button>
        <button className="ml-[3px] h-[22px] w-[78px] rounded-b-[10px] bg-[#313947] text-[#bdbfc3]">Layout2</button>
        <button aria-label="New layout" className="ml-[6px] flex h-[21px] w-[27px] items-center justify-center rounded-bl-[2px] rounded-tl-[10px] rounded-br-[10px] bg-[#313947]">
          <Plus className="h-[14px] w-[14px] text-[#b0b2b6]" strokeWidth={3} />
        </button>
      </div>
      <div className="mt-[1px] ml-auto flex gap-[3px]">
        <StatusGroup><button className="w-[59px] text-[15px] text-[#f0f0f0]">MODEL</button></StatusGroup>
        <StatusGroup>
          <StatusCell name="Grid"><Icon><path d="M4.500 0v20M9.500 0v20M14.500 0v20M0 5.500h20M0 10.500h20M0 15.500h20" /></Icon></StatusCell>
          <StatusCell name="Snap"><Icon><path d="M3.500 2v18M10.500 2v18M17.500 2v18" strokeWidth="3" strokeDasharray="3 4" /></Icon></StatusCell>
          {drop}
        </StatusGroup>
        <StatusGroup>
          <StatusCell name="Ortho"><Icon><path d="M1 0v19h19M1 14h6v5" /></Icon></StatusCell>
          <StatusCell name="Polar" on><Icon><circle cx="9" cy="10" r="8" stroke="#fff" /><path d="M9 10h11M9 10l8-8M12 7l1 5" stroke="#fff" /></Icon></StatusCell>
          {drop}
          <StatusCell name="Isometric"><Icon><path d="M2 2l6 6M12 12l6 6" stroke={O} /><path d="M10 0v7M10 13v7" stroke={G} /><path d="M8.500 8.500h3v3h-3z" /></Icon></StatusCell>
          {drop}
        </StatusGroup>
        <div className="-ml-[2px] flex gap-[1px]">
          <StatusGroup>
            <StatusCell name="Object tracking" on><Icon><path d="M0 17h20M1 16L15 2" stroke="#fff" /><circle cx="8" cy="10" r="2" fill="#fff" stroke="none" /></Icon></StatusCell>
            <StatusCell name="Object snap" on><Icon><path d="M2 5v14h17V2H5" stroke="#fff" /><path d="M0 0h5v5H0z" stroke="#fff" /></Icon></StatusCell>
            {drop}
          </StatusGroup>
          <StatusGroup>
            <StatusCell name="Line weight"><Icon><path d="M0 2h20M0 7h20" /><path d="M0 12h20" /><path d="M0 7.500h11M0 12.500h11" strokeWidth="3" /><path d="M0 17h11" strokeWidth="4" /></Icon></StatusCell>
          </StatusGroup>
          <StatusGroup>
            <StatusCell name="3D object snap" on><Icon><path d="M3 13V5l4-4h12v12l-4 4H7M3 5h12v12M15 5l4-4" stroke="#fff" /><path d="M0 15h5v5H0z" stroke="#fff" /></Icon></StatusCell>
            {drop}
          </StatusGroup>
        </div>
        <StatusGroup>
          <StatusCell name="Annotation visibility" on><Icon>{arrowPerson}<circle cx="16.500" cy="4" r="3" stroke="#fff" /></Icon></StatusCell>
          <StatusCell name="Auto scale"><Icon>{arrowPerson}<path d="M17 0l-4 5h3l-2 4 5-5h-3z" fill={L} stroke="none" /></Icon></StatusCell>
          <StatusCell name="Annotation scale"><Icon>{arrowPerson}</Icon></StatusCell>
          <button className="flex w-[42px] items-center justify-center gap-[5px] text-[#f0f0f0]">1:1 <Caret big /></button>
        </StatusGroup>
        <div className="flex gap-[2px]">
          <StatusGroup>
            <StatusCell name="Workspace"><Settings className="h-[22px] w-[22px] text-[#dcdcdc]" strokeWidth={3} /></StatusCell>
            {drop}
          </StatusGroup>
          <StatusGroup><StatusCell name="Annotation monitor"><Plus className="h-6 w-6 text-[#dcdcdc]" strokeWidth={2.500} /></StatusCell></StatusGroup>
        </div>
        <StatusGroup><StatusCell name="Isolate objects"><Icon><path d="M1 1h7v7H1zM8 12l5 8H3z" /><circle cx="15.500" cy="9" r="4" /></Icon></StatusCell></StatusGroup>
        <StatusGroup>
          <StatusCell name="Graphics performance" w="w-[34px]">
            <Icon className="h-[26px] w-[26px]" box="0 0 26 26"><circle cx="12" cy="10" r="10" fill="#2d66b8" stroke="none" /><path d="M0 14h11v9H0z" fill="#eeb03c" stroke="none" /><path d="M5 0v13M0 6h12" stroke="#a8d4f5" strokeWidth="2" /><path d="M11 18l5 5 9-10" stroke={G} strokeWidth="2.500" /></Icon>
          </StatusCell>
        </StatusGroup>
        <StatusGroup>
          <StatusCell name="Clean screen"><Icon><path d="M.500 3h19v14H.500z" /><path d="M12 5h5v5zM3 10v5h5z" fill={L} stroke="none" /></Icon></StatusCell>
          <StatusCell name="Customization"><Icon><path d="M0 2h20M0 10h20M0 18h20" strokeWidth="2" /></Icon></StatusCell>
        </StatusGroup>
      </div>
    </footer>
  );
}

/* ---------- notification ---------- */

function PerformanceTip() {
  return (
    <aside className="absolute top-[45px] right-[174px] h-[118px] w-[322px] rounded-[6px] border border-[#c4c5c7] bg-gradient-to-b from-[#dadadcf8] to-[#c6c7c9d8] pt-3 pl-[44px] text-[15px] text-[#111]">
      <svg viewBox="0 0 30 16" className="absolute top-[-16px] right-[13px] h-4 w-[30px]" aria-hidden="true"><path d="M0 16L15 0l15 16z" fill="#d8d9da" /></svg>
      <Icon className="absolute top-[11px] left-[12px] h-[30px] w-5" box="0 0 20 30">
        <path d="M6 20Q5 16 2 12T10 1t8 11q-3 4-4 8z" fill="#f0d58c" stroke="#777" />
        <path d="M7 20h6v5H7z" fill="#d5d5d5" stroke="#555" />
        <path d="M7 25h6l-3 4z" fill="#333" stroke="none" />
      </Icon>
      <h2 className="text-[14px] leading-5 font-bold text-black">3D display performance</h2>
      <p className="mt-[6px] text-[14px] leading-5">
        You can improve performance for
        <br />
        3D pan, zoom, and orbit operations.
      </p>
      <a href="#dismiss" className="mt-[6px] block text-[14px] leading-5 text-[#1414e6] underline">Don't show me this again</a>
      <button aria-label="Close tip" className="absolute top-[6px] right-[8px] flex h-[14px] w-[14px] items-center justify-center rounded-full bg-[#666]">
        <X className="h-[10px] w-[10px] text-[#ddd]" strokeWidth={3} />
      </button>
      <svg viewBox="0 0 16 12" className="absolute right-[12px] bottom-[12px] h-3 w-4" aria-hidden="true"><path d="M0 0h16L8 12z" fill="#505153" /></svg>
    </aside>
  );
}

/* ---------- windows taskbar ---------- */

const apps: { name: string; running?: boolean; art: ReactNode }[] = [
  { name: 'Task view', art: <><path d="M0 8h22v20H0z" fill="#2a2627" /><path d="M7 1h22v19H7z" fill="#e9eaec" fillOpacity=".85" /></> },
  { name: 'Chat', art: <><circle cx="15" cy="15" r="14" fill="#6b6fd3" /><path d="M1 15v14h14z" fill="#4a52c0" /><path d="M7 9h11v12H7zM19 13l5-3v10l-5-3z" fill="#fff" /></> },
  { name: 'DaVinci Resolve', art: <><circle cx="15" cy="15" r="14.500" fill="#1d222b" /><path d="M15 4q6 6 3 10h-6q-3-4 3-10z" fill="#4fb4e6" /><circle cx="9.500" cy="18.500" r="4.500" fill="#f0c24a" /><circle cx="20.500" cy="18.500" r="4.500" fill="#e2593c" /></> },
  { name: 'Photoshop', art: <><rect x="1" y="1" width="28" height="27" rx="5" fill="#04182c" /><text x="5" y="20" fontSize="16" fontWeight="bold" fill="#35a6f5">Ps</text></> },
  { name: 'Signal tool', art: <><circle cx="14" cy="14" r="13" fill="#2230d8" /><path d="M2 13q8-6 13 0t11 4M2 17q8-6 12 0t9 6M4 21q7-4 12 3M12 2l2 8M18 2l1 10" stroke="#fff" strokeWidth="1.500" fill="none" /><path d="M20 20l8 2-6 7z" fill="#c5c5cf" stroke="#444" strokeWidth=".7" /></> },
  { name: 'File Explorer', running: true, art: <><path d="M0 3h11l3 3h15v6H0z" fill="#e2991c" /><path d="M0 8h30v20H0z" fill="#fcc934" /><path d="M5 28v-7q0-2 2-2h15q2 0 2 2v7z" fill="#1772c8" /></> },
  { name: 'Mail', art: <><path d="M0 11L15 1l15 10v17H0z" fill="#1b6fb8" /><path d="M4 10h22L15 20z" fill="#eef3f6" /><path d="M0 12l15 9 15-9v16H0z" fill="#2fa5e8" /></> },
  { name: 'Arduino', art: <><path d="M0 0h30v30H0z" fill="#0b78d4" /><circle cx="15" cy="15" r="13.500" fill="#0f979c" /><circle cx="10" cy="15" r="3.500" fill="none" stroke="#fff" strokeWidth="2" /><circle cx="20" cy="15" r="3.500" fill="none" stroke="#fff" strokeWidth="2" /></> },
  { name: 'Microsoft Store', art: <><path d="M8 6V1h14v5" fill="none" stroke="#35b3ea" strokeWidth="2" /><path d="M1 5h28v21q0 3-3 3H4q-3 0-3-3z" fill="#1c4f8c" /><path d="M10 12h5v5h-5z" fill="#e4552c" /><path d="M16 12h5v5h-5z" fill="#7cb83c" /><path d="M10 18h5v5h-5z" fill="#39a5e5" /><path d="M16 18h5v5h-5z" fill="#f6bb2e" /></> },
  { name: 'Netflix', art: <><path d="M0 0h30v30H0z" fill="#0b0b0b" /><path d="M10 5h3.500l3 9V5H20v20h-3.500l-3-9v9H10z" fill="#d31d24" /></> },
  { name: 'Chrome', running: true, art: <><circle cx="15" cy="15" r="15" fill="#f9c12f" /><path d="M15 15L2 7.500A15 15 0 0 1 28 7.500H15z" fill="#d93a2b" /><path d="M2 7.500L9 19l7 11A15 15 0 0 1 2 7.500z" fill="#34994c" /><circle cx="15" cy="15" r="7" fill="#fff" /><circle cx="15" cy="15" r="5.500" fill="#2d75e8" /></> },
  { name: 'Edge', art: <><circle cx="15" cy="15" r="15" fill="#1b80d4" /><path d="M1 11Q5 0 15 0t15 12q0 8-9 8-4-1-2-5-2-6-9-6T1 15z" fill="#45c3d8" /><path d="M22 2q8 4 8 12t-9 6q-4-1-2-5 2-6 3-13z" fill="#5fd05c" /><path d="M8 14q-2 12 9 13 6 0 10-4-3 7-12 7T5 24q-2-6 3-10z" fill="#12529c" /><path d="M14 14q-3 10 13 7l-2 3q-11 2-14-5 0-4 3-5z" fill="#ece2d3" /></> },
  { name: 'Discord', art: <circle cx="15" cy="15" r="15" fill="#5865f2" /> },
  { name: 'Teams', art: <><circle cx="16" cy="6" r="5" fill="#7b83eb" /><circle cx="25" cy="7" r="3.500" fill="#5059c9" /><path d="M11 12h12v9q0 7-7 7t-7-5z" fill="#7b83eb" /><path d="M22 12h8v8q0 5-5 5h-3z" fill="#5059c9" /><path d="M1 7h15v15H1z" fill="#4750b5" /><text x="4.500" y="19" fontSize="13" fontWeight="bold" fill="#fff">T</text></> },
  { name: 'MATLAB', art: <><path d="M0 17l10-4 4 7-7 3z" fill="#3e8fc9" /><path d="M10 13q5-2 9-12l-5 19-3 8-4-5z" fill="#8b3a1c" /><path d="M19 1q4 8 11 23-5-5-8-1t-10 5q3-4 7-27z" fill="#e2692a" /><path d="M19 1q4 8 11 23-4-5-7-3-2-8-4-20z" fill="#b12b1c" /><path d="M18 8q4 10 3 14-4 4-8 5 4-6 5-19z" fill="#f6bd3a" /></> },
];

function Taskbar() {
  return (
    <footer className="relative flex h-[60px] items-center border-t border-[#c0bcb5] bg-[linear-gradient(90deg,#eee0cd_0%,#ece0d0_6%,#dedddb_14%,#dcdcd8_32%,#ecdfcd_41%,#ecdfcd_66%,#e3dcd2_78%,#dddbd8_100%)] text-[#1c1c1c]">
      <button className="flex w-[331px] items-center pl-6 text-left">
        <div className="relative mr-[6px] h-10 w-[34px]">
          <svg viewBox="0 0 34 40" className="h-10 w-[34px]" aria-hidden="true">
            <g fill="#f0a030" stroke="#c97a14" strokeWidth=".8">
              <ellipse cx="13" cy="24" rx="11" ry="4.500" />
              <ellipse cx="12" cy="20" rx="11" ry="4.500" />
              <ellipse cx="15" cy="15" rx="11" ry="4.500" />
              <ellipse cx="13" cy="11" rx="11" ry="4.500" />
            </g>
            <path d="M10 36l6-6 6 6" stroke="#3fae46" strokeWidth="3" fill="none" />
          </svg>
          <span className="absolute -top-[1px] right-0 flex h-5 w-5 items-center justify-center rounded-full bg-[#c9281f] text-[13px] font-bold text-white">1</span>
        </div>
        <span className="text-[14px] leading-5">
          EUR/USD
          <br />
          <span className="text-[#23803a]">+0.27%</span>
        </span>
      </button>
      <button aria-label="Start">
        <svg viewBox="0 0 30 30" className="h-[30px] w-[30px]" aria-hidden="true">
          <path d="M0 0h14.500v14.500H0z" fill="#31b2ec" />
          <path d="M15.500 0H30v14.500H15.500zM0 15.500h14.500V30H0z" fill="#1590dd" />
          <path d="M15.500 15.500H30V30H15.500z" fill="#0b78d4" />
        </svg>
      </button>
      <label className="ml-[18px] flex h-[39px] w-[273px] items-center rounded-full border border-[#d5d2cc] bg-[#f6f6f4] pl-[14px]">
        <Search className="h-[19px] w-[19px] text-[#222]" strokeWidth={2.500} />
        <input aria-label="Search" placeholder="Search" className="ml-3 w-40 bg-transparent text-[17px] outline-none placeholder:text-[#5a5a5a]" />
      </label>
      <div className="ml-1 flex">
        {apps.map((a) => (
          <button key={a.name} aria-label={a.name} className="relative flex h-[50px] w-[55px] items-center justify-center">
            <svg viewBox="0 0 30 30" className="h-[30px] w-[30px]" fontFamily="Open Sans" aria-hidden="true">{a.art}</svg>
            {a.name === 'Discord' && <FaDiscord className="absolute h-[19px] w-[19px] text-white" />}
            {a.name === 'Chrome' && (
              <span className="absolute top-1 right-[6px] flex h-5 w-5 items-center justify-center rounded-full bg-[#263038] text-[12px] font-bold text-[#ddd]">M</span>
            )}
            {a.running && <span className="absolute bottom-0 h-1 w-2 rounded-full bg-[#8a8580]" />}
          </button>
        ))}
        <button aria-label="AutoCAD" className="relative ml-1 flex h-[50px] w-[47px] items-center justify-center rounded-[5px] border border-[#e5dfd6] bg-[#f5f0ea]">
          <AutocadLogo className="h-[22px] w-5" />
          <span className="absolute bottom-0 h-[3px] w-5 rounded-full bg-[#0b78d4]" />
        </button>
      </div>
      <div className="ml-auto flex items-center pr-6 text-[14px]">
        <ChevronUp className="h-[18px] w-[18px]" strokeWidth={2} />
        <div className="relative ml-[21px]">
          <RefreshCw className="h-[21px] w-[21px]" strokeWidth={1.500} />
          <span className="absolute right-0 bottom-0 h-[10px] w-[10px] rounded-full bg-[#f29b1d]" />
        </div>
        <span className="ml-6">ENG</span>
        <Wifi className="ml-[22px] h-5 w-5" strokeWidth={2} />
        <Volume2 className="ml-[10px] h-5 w-5" strokeWidth={1.500} />
        <BatteryCharging className="ml-[10px] h-5 w-5 fill-[#1c1c1c]" strokeWidth={1.500} />
        <p className="ml-5 text-right leading-5">
          7:49 PM
          <br />
          9/15/2023
        </p>
        <span className="ml-2 flex h-[22px] w-[22px] items-center justify-center rounded-full bg-[#0b78d4] text-[12px] font-semibold text-white">13</span>
      </div>
    </footer>
  );
}

function Watermark() {
  return (
    <div className="pointer-events-none absolute bottom-0 left-[840px] flex w-[240px] flex-col items-center text-[#8c8f92]/60">
      <span lang="ar" className="font-['DejaVu_Sans',sans-serif] text-[72px] leading-[72px] font-bold">مستقل</span>
      <span className="font-['Liberation_Sans',sans-serif] text-[40px] leading-[60px] font-bold text-[#a8a5a0]/40">mostaql.com</span>
    </div>
  );
}

export default function App() {
  return (
    <div className="relative flex h-screen min-h-[900px] flex-col overflow-hidden bg-[#f1f1f1] font-['Open_Sans','Noto_Sans',sans-serif] text-[14px]">
      {/* strip of the window behind, showing at the left edge */}
      <span className="absolute top-[88px] left-0 h-[76px] w-1 bg-[#1a80c8]" />
      <div className="relative mr-[3px] ml-1 flex min-h-0 flex-1 flex-col border border-[#0c93d8] bg-[#222933]">
        <TitleBar />
        <MenuBar />
        <RibbonTabs />
        <Ribbon />
        <FileTabs />
        <Viewport />
        <StatusBar />
      </div>
      <Taskbar />
      <PerformanceTip />
      <Watermark />
    </div>
  );
}
